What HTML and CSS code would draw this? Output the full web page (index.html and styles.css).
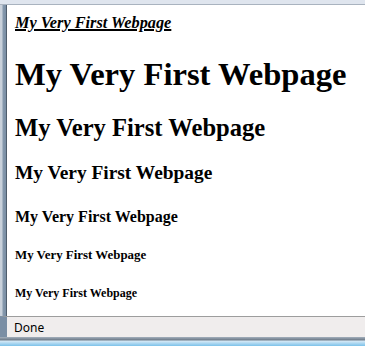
FILE: index.html
```html
<!DOCTYPE html>
<html>

<head>
    <title>My Very First Webpage</title>
    <link rel="stylesheet" href="styles.css">
</head>

<body>
    <div class="window">
        <div class="top-edge"></div>
        <div class="middle">
            <div class="left-frame"></div>
            <main class="page">
                <div class="intro"><u><i><b>My Very First Webpage</b></i></u></div>
                <h1>My Very First Webpage</h1>
                <h2>My Very First Webpage</h2>
                <h3>My Very First Webpage</h3>
                <h4>My Very First Webpage</h4>
                <h5>My Very First Webpage</h5>
                <h6>My Very First Webpage</h6>
            </main>
        </div>
        <div class="status-bar">
            <span class="status-text">Done</span>
        </div>
        <div class="bottom-edge"></div>
    </div>
</body>

</html>
```

FILE: styles.css
```css
body {
    margin: 0;
    padding: 0;
    width: 365px;
    height: 346px;
    overflow: hidden;
}

.window {
    display: flex;
    flex-direction: column;
    height: 346px;
}

.top-edge {
    height: 4px;
    background: #dfe5ee;
    border-bottom: 1px solid #a9b3bf;
    flex-shrink: 0;
}

.middle {
    display: flex;
    flex-grow: 1;
    overflow: hidden;
}

.left-frame {
    width: 6px;
    background: linear-gradient(to right, #c9d1db 0, #c9d1db 2px, #8699ad 3px, #7a8ea4 6px);
    border-right: 1px solid #4f5d6c;
    flex-shrink: 0;
}

.page {
    flex-grow: 1;
    background: #ffffff;
    padding: 8px;
    font-family: "Liberation Serif", "Times New Roman", serif;
    color: #000000;
    overflow: hidden;
    white-space: nowrap;
}

.intro {
    font-size: 16.3px;
    line-height: 19px;
}

.intro u {
    text-decoration-thickness: 2px;
}

h1 {
    font-size: 32.6px;
    margin: 24px 0 21px;
}

h2 {
    font-size: 24.6px;
    margin: 20px 0;
}

h3 {
    font-size: 19.4px;
    margin: 19px 0;
}

h4 {
    font-size: 16px;
    margin: 24px 0 22px;
}

h5 {
    font-size: 12.9px;
    margin: 22px 0;
}

h6 {
    font-size: 12px;
    margin: 23px 0;
}

.status-bar {
    height: 20px;
    flex-shrink: 0;
    background: #f0eded;
    border-top: 1px solid #9d9d9d;
    border-left: 7px solid #7a8ea4;
    display: flex;
    align-items: center;
    padding-left: 7px;
    font-family: "Noto Sans", "Open Sans", sans-serif;
    font-size: 12px;
    color: #000000;
}

.bottom-edge {
    height: 9px;
    flex-shrink: 0;
    background: linear-gradient(to bottom, #a4b0bd 0, #6d7a88 3px, #d6e9f6 4px, #7cc2ea 9px);
}
```
